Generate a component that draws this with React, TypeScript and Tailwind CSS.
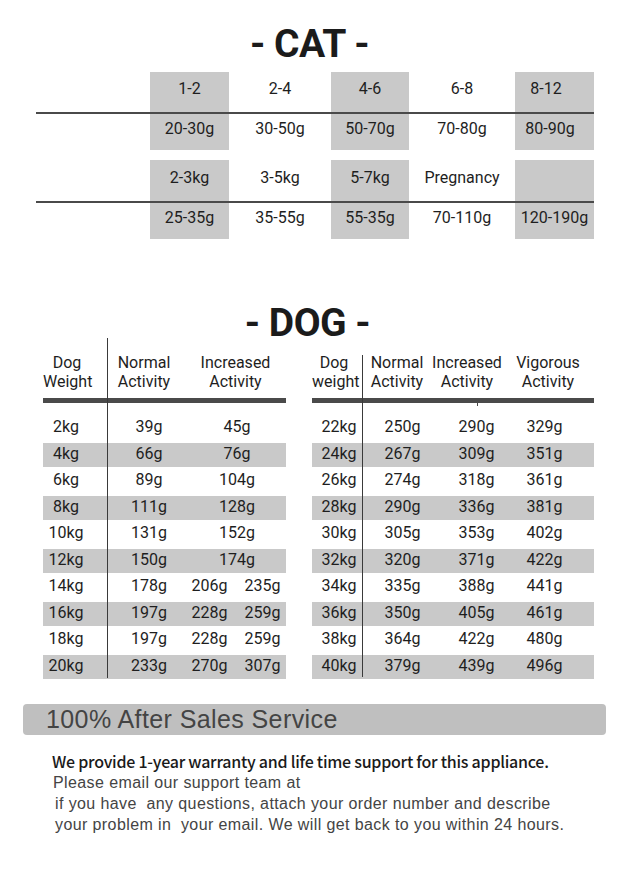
import React from "react";

const GRAY = "bg-[#c9c9c9]";

const catWidths = ["w-[79px]", "w-[102px]", "w-[78px]", "w-[106px]", "w-[79px]"];

type CatCell = { t: string; cls?: string };

const catBlocks: { top: CatCell[]; bottom: CatCell[] }[] = [
  {
    top: [{ t: "1-2" }, { t: "2-4" }, { t: "4-6" }, { t: "6-8" }, { t: "8-12", cls: "pr-[17px]" }],
    bottom: [{ t: "20-30g" }, { t: "30-50g" }, { t: "50-70g" }, { t: "70-80g" }, { t: "80-90g", cls: "pr-[9px]" }],
  },
  {
    top: [{ t: "2-3kg" }, { t: "3-5kg" }, { t: "5-7kg" }, { t: "Pregnancy" }, { t: "" }],
    bottom: [{ t: "25-35g" }, { t: "35-55g" }, { t: "55-35g" }, { t: "70-110g" }, { t: "120-190g" }],
  },
];

const leftRows: string[][] = [
  ["2kg", "39g", "45g"],
  ["4kg", "66g", "76g"],
  ["6kg", "89g", "104g"],
  ["8kg", "111g", "128g"],
  ["10kg", "131g", "152g"],
  ["12kg", "150g", "174g"],
  ["14kg", "178g", "206g", "235g"],
  ["16kg", "197g", "228g", "259g"],
  ["18kg", "197g", "228g", "259g"],
  ["20kg", "233g", "270g", "307g"],
];

const rightRows: string[][] = [
  ["22kg", "250g", "290g", "329g"],
  ["24kg", "267g", "309g", "351g"],
  ["26kg", "274g", "318g", "361g"],
  ["28kg", "290g", "336g", "381g"],
  ["30kg", "305g", "353g", "402g"],
  ["32kg", "320g", "371g", "422g"],
  ["34kg", "335g", "388g", "441g"],
  ["36kg", "350g", "405g", "461g"],
  ["38kg", "364g", "422g", "480g"],
  ["40kg", "379g", "439g", "496g"],
];

function CatRow({ cells, h, pb }: { cells: CatCell[]; h: string; pb: string }) {
  return (
    <div className={`flex ${h}`}>
      <div className="w-[114px]" />
      {cells.map((c, i) => (
        <div
          key={i}
          className={`${catWidths[i]} ${i % 2 === 0 ? GRAY : ""} flex items-center justify-center ${pb} ${c.cls ?? ""}`}
        >
          {c.t}
        </div>
      ))}
    </div>
  );
}

function Title({ children, cls }: { children: React.ReactNode; cls: string }) {
  return (
    <div
      className={`${cls} text-center text-[39px] leading-[30px] font-bold text-[#1b1b1b] tracking-[-0.5px]`}
      style={{ fontFamily: "Roboto, 'Noto Sans', sans-serif" }}
    >
      {children}
    </div>
  );
}

export default function App() {
  return (
    <div
      className="w-[631px] h-[883px] bg-white overflow-hidden flex flex-col text-[#1e1e1e]"
      style={{ fontFamily: "Roboto, 'Noto Sans', sans-serif" }}
    >
      <Title cls="mt-[29px] pr-[12px]">- CAT -</Title>

      {/* Cat table */}
      <div className="mt-[13px] ml-[36px] w-[558px] text-[16px]">
        {catBlocks.map((b, bi) => (
          <div key={bi} className={bi === 1 ? "mt-[10px]" : ""}>
            <CatRow cells={b.top} h={bi === 0 ? "h-[40px]" : "h-[41px]"} pb={bi === 0 ? "pb-[6px]" : "pb-[5px]"} />
            <div className="h-[2px] bg-[#4a4a4a]" />
            <CatRow cells={b.bottom} h="h-[36px]" pb="pb-[6px]" />
          </div>
        ))}
      </div>

      <Title cls="mt-[69px] pr-[16px]">- DOG -</Title>

      {/* Dog tables */}
      <div className="flex text-[16px]">
        {/* Left table */}
        <div className="relative ml-[43px] w-[243px]">
          <div className="flex h-[60px] pt-[15px] leading-[19px] text-center">
            <div className="w-[64px] pr-[16px]">Dog<br />Weight</div>
            <div className="w-[74px]">Normal<br />Activity</div>
            <div className="w-[105px] pl-[4px]">Increased<br />Activity</div>
          </div>
          <div className="h-[5px] bg-[#4a4a4a]" />
          <div className="mt-[11px]">
            {leftRows.map((r, i) => (
              <div
                key={i}
                className={`flex items-center pb-[3px] ${i % 2 === 1 ? `h-[24px] ${GRAY}` : "h-[29px]"}`}
              >
                <div className="w-[64px] pr-[18px] text-center">{r[0]}</div>
                <div className="w-[84px] text-center">{r[1]}</div>
                {r.length === 3 ? (
                  <div className="w-[95px] pr-[3px] text-center">{r[2]}</div>
                ) : (
                  <div className="w-[95px] flex">
                    <span className="w-[37px] text-center">{r[2]}</span>
                    <span className="ml-[16px] w-[37px] text-center">{r[3]}</span>
                  </div>
                )}
              </div>
            ))}
          </div>
          <div className="absolute left-[64px] top-0 bottom-[1px] w-px bg-[#3a3a3a]" />
        </div>

        {/* Right table */}
        <div className="relative ml-[26px] w-[282px]">
          <div className="flex h-[60px] pt-[15px] leading-[19px] text-center">
            <div className="w-[50px] pr-[6px]">Dog<br />weight</div>
            <div className="w-[70px]">Normal<br />Activity</div>
            <div className="w-[70px]">Increased<br />Activity</div>
            <div className="w-[92px]">Vigorous<br />Activity</div>
          </div>
          <div className="h-[5px] bg-[#4a4a4a]" />
          <div className="mt-[11px]">
            {rightRows.map((r, i) => (
              <div
                key={i}
                className={`flex items-center pb-[3px] ${i % 2 === 1 ? `h-[24px] ${GRAY}` : "h-[29px]"}`}
              >
                <div className="w-[50px] pl-[4px] text-center">{r[0]}</div>
                <div className="w-[81px] text-center">{r[1]}</div>
                <div className="w-[67px] text-center">{r[2]}</div>
                <div className="w-[69px] text-center">{r[3]}</div>
              </div>
            ))}
          </div>
          <div className="absolute left-[50px] top-[17px] bottom-[2px] w-px bg-[#3a3a3a]" />
          <div className="absolute left-[165px] top-[65px] w-px h-[3px] bg-[#4a4a4a]" />
        </div>
      </div>

      {/* After sales */}
      <div
        className="mt-[25px] ml-[23px] w-[583px] h-[31px] rounded-[4px] bg-[#bfbfbf] pl-[23px] flex items-center text-[25px] leading-[31px] tracking-[0.4px] text-[#444]"
        style={{ fontFamily: "'Liberation Sans', Arial, sans-serif" }}
      >
        100% After Sales Service
      </div>

      <div className="mt-[16px] pl-[52px] text-[16px] leading-[21px] font-medium text-[#1a1a1a] tracking-[-0.25px]"
        style={{ fontFamily: "'Noto Sans CJK SC', 'Noto Sans', sans-serif" }}
      >
        We provide 1-year warranty and life time support for this appliance.
      </div>
      <div
        className="text-[16px] leading-[21px] tracking-[0.4px] text-[#444]"
        style={{ fontFamily: "'Liberation Sans', Arial, sans-serif" }}
      >
        <div className="pl-[53px]">Please email our support team at</div>
        <div className="pl-[55px]">if you have&nbsp; any questions, attach your order number and describe</div>
        <div className="pl-[55px]">your problem in&nbsp; your email. We will get back to you within 24 hours.</div>
      </div>
    </div>
  );
}
